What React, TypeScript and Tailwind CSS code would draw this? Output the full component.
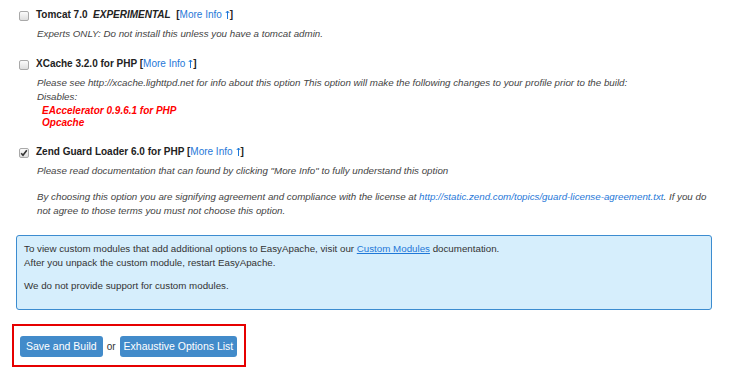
import { useState } from 'react'

interface OptionProps {
  checked?: boolean
  title: React.ReactNode
  children: React.ReactNode
}

const Checkbox = ({ checked }: { checked?: boolean }) => (
  <span className="mt-[3px] flex h-[10px] w-[10px] flex-shrink-0 items-center justify-center rounded-[2px] border border-[#a9a9a9] bg-gradient-to-b from-[#fbfbfb] to-[#dedede]">
    {checked && (
      <svg width="8" height="8" viewBox="0 0 8 8" fill="none" stroke="#333" strokeWidth="1.6">
        <path d="M1.2 4.2l1.8 2 3.8-5" />
      </svg>
    )}
  </span>
)

// small thin up arrow after "More Info"
const UpArrow = () => (
  <svg width="5" height="9" viewBox="0 0 5 9" fill="none" stroke="currentColor" strokeWidth="1" className="ml-[3px] inline-block align-[-1px]">
    <path d="M2.5 1v8M0.8 3l1.7-2 1.7 2" />
  </svg>
)

const MoreInfo = () => (
  <>
    [<span className="font-normal text-[#1f78d8]">More Info<UpArrow /></span>]
  </>
)

const Option = ({ checked, title, children }: OptionProps) => (
  <div className="flex gap-[7px] pl-[19px]">
    <Checkbox checked={checked} />
    <div className="flex flex-col">
      <div className="text-[10px] font-bold text-[#222] leading-[14px]">{title}</div>
      <div className="mt-[5px] pl-px italic text-[#444] leading-[14px]">{children}</div>
    </div>
  </div>
)

export default function App() {
  const [zend] = useState(true)

  return (
    <div className="min-h-[374px] bg-white pt-[8px] text-[9.75px] text-[#333] font-['Liberation_Sans',Arial,sans-serif]">
      <div className="flex flex-col gap-[16px]">
        <Option
          title={
            <>
              Tomcat 7.0 &nbsp;<i>EXPERIMENTAL</i> &nbsp;<MoreInfo />
            </>
          }
        >
          Experts ONLY: Do not install this unless you have a tomcat admin.
        </Option>

        <Option
          title={
            <>
              XCache 3.2.0 for PHP <MoreInfo />
            </>
          }
        >
          <div>
            Please see http://xcache.lighttpd.net for info about this option This option will make the following changes to your profile prior to the build:
          </div>
          <div>Disables:</div>
          <div className="pl-[5px] text-[10px] font-bold text-[#ff0000]">
            <div className="leading-[13px]">EAccelerator 0.9.6.1 for PHP</div>
            <div className="leading-[12px]">Opcache</div>
          </div>
        </Option>

        <Option
          checked={zend}
          title={
            <>
              Zend Guard Loader 6.0 for PHP <MoreInfo />
            </>
          }
        >
          <p>Please read documentation that can found by clicking "More Info" to fully understand this option</p>
          <p className="mt-[12px] pr-[20px]">
            By choosing this option you are signifying agreement and compliance with the license at{' '}
            <span className="text-[#1f78d8]">http://static.zend.com/topics/guard-license-agreement.txt</span>. If you do not agree to those terms you must not choose this option.
          </p>
        </Option>
      </div>

      <div className="ml-[16px] mr-[26px] mt-[17px] rounded-[3px] border border-[#3c8cd0] bg-[#d6eefc] px-[7px] pb-[16px] pt-[6px] leading-[14px] text-[#333]">
        <p>
          To view custom modules that add additional options to EasyApache, visit our{' '}
          <span className="text-[#1f78d8] underline">Custom Modules</span> documentation.
        </p>
        <p>After you unpack the custom module, restart EasyApache.</p>
        <p className="mt-[9px]">We do not provide support for custom modules.</p>
      </div>

      <div className="ml-[12px] mt-[14px] inline-flex items-center gap-[4px] border-2 border-[#e60000] pb-[8px] pl-[6px] pr-[7px] pt-[10px]">
        <button className="h-[21px] rounded-[3px] bg-[#428bca] px-[6px] text-[10.5px] text-white">Save and Build</button>
        <span className="text-[10px] text-[#333]">or</span>
        <button className="h-[21px] rounded-[3px] bg-[#428bca] px-[4px] text-[10.5px] text-white">Exhaustive Options List</button>
      </div>
    </div>
  )
}
